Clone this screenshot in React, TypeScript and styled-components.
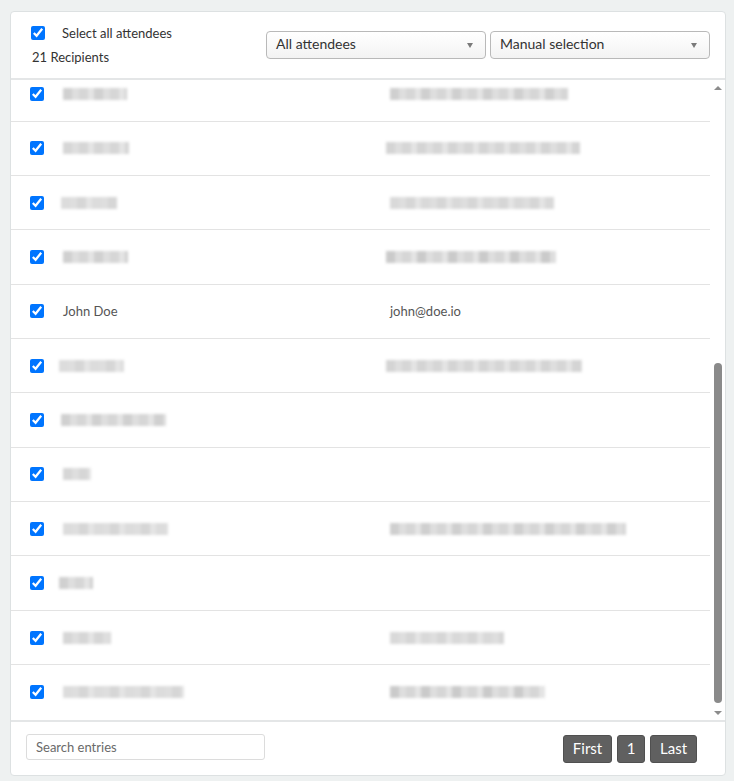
import React, { useLayoutEffect, useRef, useState } from "react";
import styled, { createGlobalStyle } from "styled-components";

const GlobalStyle = createGlobalStyle`
  html, body {
    margin: 0;
    padding: 0;
    background: #eef1f1;
    font-family: Lato, "Open Sans", "Liberation Sans", sans-serif;
  }
  * { box-sizing: border-box; }
`;

const Page = styled.div`
  padding: 11px 8px 5px 10px;
  height: 781px;
`;

const Card = styled.div`
  width: 716px;
  height: 765px;
  background: #fff;
  border: 1px solid #dde1e2;
  border-radius: 4px;
  display: flex;
  flex-direction: column;
  overflow: hidden;
`;

const Header = styled.div`
  height: 68px;
  flex: none;
  border-bottom: 2px solid #e4e6e7;
  display: flex;
  justify-content: space-between;
  padding: 0 15px 0 20px;
`;

const HeaderLeft = styled.div`
  display: flex;
  flex-direction: column;
  padding-top: 14px;
`;

const SelectAll = styled.label`
  display: flex;
  align-items: center;
  gap: 17px;
  font-size: 13px;
  color: #333;
  height: 14px;
  line-height: 12px;
  padding-bottom: 1px;
`;

const Recipients = styled.div`
  margin-top: 9px;
  margin-left: 1px;
  font-size: 13px;
  color: #333;
`;

const Check = styled.input.attrs({ type: "checkbox" })`
  width: 14px;
  height: 14px;
  margin: 0;
  accent-color: #0075ff;
  flex: none;
`;

const Selects = styled.div`
  display: flex;
  gap: 4px;
  padding-top: 19px;
`;

const SelectBox = styled.div`
  width: 220px;
  height: 28px;
  border: 1px solid #b9b9b9;
  border-radius: 4px;
  background: linear-gradient(#ffffff, #f3f3f3);
  display: flex;
  align-items: center;
  justify-content: space-between;
  padding: 0 12px 3px 9px;
  font-size: 14px;
  color: #333;
`;

const Caret = styled.span`
  width: 0;
  height: 0;
  margin-top: 3px;
  border-left: 3.5px solid transparent;
  border-right: 3.5px solid transparent;
  border-top: 5px solid #7a7a7a;
`;

const ListArea = styled.div`
  flex: 1;
  min-height: 0;
  display: flex;
`;

const ListScroll = styled.div`
  flex: 1;
  min-width: 0;
  overflow-y: scroll;
  scrollbar-width: none;
  &::-webkit-scrollbar { display: none; }
`;

const Rail = styled.div`
  width: 15px;
  flex: none;
  display: flex;
  flex-direction: column;
  background: #fff;
`;

const RailArrow = styled.div<{ $up?: boolean }>`
  height: 15px;
  flex: none;
  display: flex;
  align-items: center;
  justify-content: center;
  padding-left: 1px;
  &::before {
    content: "";
    width: 0;
    height: 0;
    border-left: 4px solid transparent;
    border-right: 4px solid transparent;
    ${(p) =>
      p.$up
        ? "border-bottom: 4px solid #8c8c8c;"
        : "border-top: 4px solid #8c8c8c;"}
  }
`;

const RailTrack = styled.div`
  flex: 1;
  position: relative;
`;

const Thumb = styled.div`
  position: absolute;
  left: 4px;
  width: 8px;
  border-radius: 4px;
  background: #8a8a8a;
`;

const Row = styled.div`
  height: 54.36px;
  display: grid;
  grid-template-columns: 14px 308px 1fr;
  column-gap: 19px;
  align-items: center;
  padding-left: 19px;
  border-bottom: 1px solid #e3e3e3;
  font-size: 13px;
  color: #555;
  &:last-child { border-bottom: none; }
`;

const Cell = styled.div<{ $shift?: number }>`
  display: flex;
  align-items: center;
  margin-left: ${(p) => p.$shift ?? 0}px;
`;

const Redacted = styled.span<{ $tone: number }>`
  display: inline-block;
  height: 12px;
  background: repeating-linear-gradient(
    90deg,
    rgb(${(p) => p.$tone}, ${(p) => p.$tone}, ${(p) => p.$tone}) 0 9px,
    #dedede 9px 16px,
    #d6d6d6 16px 25px,
    #e4e4e4 25px 31px
  );
  filter: blur(1.4px);
`;

const Footer = styled.div`
  height: 55px;
  flex: none;
  border-top: 2px solid #e4e6e7;
  display: flex;
  align-items: flex-start;
  justify-content: space-between;
  padding: 12px 28px 0 15px;
`;

const Search = styled.input`
  width: 239px;
  height: 26px;
  border: 1px solid #dcdcdc;
  border-radius: 3px;
  padding: 0 9px;
  font-family: inherit;
  font-size: 13px;
  color: #333;
  &::placeholder { color: #6a6a6a; }
  outline: none;
`;

const Pager = styled.div`
  display: flex;
  gap: 5px;
  padding-top: 1px;
`;

const PageButton = styled.button<{ $w: number }>`
  width: ${(p) => p.$w}px;
  height: 28px;
  background: #606060;
  border: 1px solid #505050;
  border-radius: 3px;
  color: #fff;
  font-family: inherit;
  font-size: 15px;
  padding: 0 0 2px;
  display: flex;
  align-items: center;
  justify-content: center;
`;

type Person = {
  name?: string;
  nameW: number;
  nameShift?: number;
  email?: string;
  emailW: number;
  emailShift?: number;
};

const people: Person[] = [
  { nameW: 70, emailW: 165 },
  { nameW: 60, emailW: 150 },
  { nameW: 70, emailW: 170 },
  { nameW: 55, emailW: 160 },
  { nameW: 80, emailW: 190 },
  { nameW: 65, emailW: 175 },
  { nameW: 50, emailW: 140 },
  { nameW: 75, emailW: 185 },
  { nameW: 60, emailW: 160 },
  { nameW: 64, emailW: 178 },
  { nameW: 66, emailW: 194, emailShift: -4 },
  { nameW: 56, nameShift: -2, emailW: 164 },
  { nameW: 65, emailW: 170, emailShift: -4 },
  { name: "John Doe", nameW: 0, email: "john@doe.io", emailW: 0 },
  { nameW: 65, nameShift: -4, emailW: 196, emailShift: -4 },
  { nameW: 105, nameShift: -2, emailW: 0 },
  { nameW: 28, emailW: 0 },
  { nameW: 105, emailW: 236 },
  { nameW: 34, nameShift: -4, emailW: 0 },
  { nameW: 48, emailW: 114 },
  { nameW: 121, emailW: 155 },
];

export default function App() {
  const listRef = useRef<HTMLDivElement>(null);
  const trackRef = useRef<HTMLDivElement>(null);
  const [thumb, setThumb] = useState({ top: 0, height: 0 });

  const update = () => {
    const el = listRef.current;
    const track = trackRef.current;
    if (!el || !track) return;
    const trackH = track.clientHeight;
    const ratio = el.clientHeight / el.scrollHeight;
    const height = Math.max(20, trackH * ratio - 2);
    const maxScroll = el.scrollHeight - el.clientHeight;
    const top = maxScroll > 0 ? ((trackH - height - 2) * el.scrollTop) / maxScroll : 0;
    setThumb({ top, height });
  };

  useLayoutEffect(() => {
    if (listRef.current) listRef.current.scrollTop = listRef.current.scrollHeight;
    update();
  }, []);

  return (
    <>
      <GlobalStyle />
      <Page>
        <Card>
          <Header>
            <HeaderLeft>
              <SelectAll>
                <Check defaultChecked />
                Select all attendees
              </SelectAll>
              <Recipients>21 Recipients</Recipients>
            </HeaderLeft>
            <Selects>
              <SelectBox>
                All attendees
                <Caret />
              </SelectBox>
              <SelectBox>
                Manual selection
                <Caret />
              </SelectBox>
            </Selects>
          </Header>
          <ListArea>
            <ListScroll ref={listRef} onScroll={update}>
              {people.map((p, i) => (
                <Row key={i}>
                  <Check defaultChecked />
                  <Cell $shift={p.nameShift}>
                    {p.name ? p.name : <Redacted $tone={208 + (i % 3) * 6} style={{ width: p.nameW }} />}
                  </Cell>
                  <Cell $shift={p.emailShift}>
                    {p.email ? p.email : p.emailW > 0 ? <Redacted $tone={202 + (i % 4) * 5} style={{ width: p.emailW }} /> : null}
                  </Cell>
                </Row>
              ))}
            </ListScroll>
            <Rail>
              <RailArrow $up />
              <RailTrack ref={trackRef}>
                <Thumb style={{ top: thumb.top, height: thumb.height }} />
              </RailTrack>
              <RailArrow />
            </Rail>
          </ListArea>
          <Footer>
            <Search placeholder="Search entries" />
            <Pager>
              <PageButton $w={49}>First</PageButton>
              <PageButton $w={28}>1</PageButton>
              <PageButton $w={47}>Last</PageButton>
            </Pager>
          </Footer>
        </Card>
      </Page>
    </>
  );
}
